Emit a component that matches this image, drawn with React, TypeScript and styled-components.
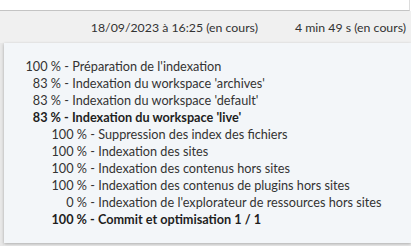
import React from "react";
import styled, { createGlobalStyle } from "styled-components";

const Global = createGlobalStyle`
  html, body { margin: 0; padding: 0; background: #ffffff; }
  body { font-family: "Lato", "Open Sans", "Liberation Sans", sans-serif; }
`;

const Page = styled.div`
  width: 411px;
  height: 246px;
  overflow: hidden;
  display: flex;
  flex-direction: column;
  background: #ffffff;
`;

const TopStrip = styled.div`
  height: 10px;
  flex: none;
  background: #ffffff;
  border-right: 1px solid #dcdcdc;
  margin-right: 1px;
  border-bottom: 1px solid #c4c4c4;
  box-shadow: 0 1px 0 #dedede;
`;

const DateRow = styled.div`
  height: 32px;
  flex: none;
  display: flex;
  justify-content: flex-end;
  align-items: center;
  gap: 37px;
  padding: 0 5px 0 0;
  background: #f0f0f0;
  color: #333333;
  font-size: 12.3px;
  white-space: nowrap;
`;

const Cell = styled.span``;

const Body = styled.div`
  flex: 1;
  display: flex;
  background: #ececec;
  min-height: 0;
`;

const Gutter = styled.div`
  width: 4px;
  flex: none;
  background: #e8e8e8;
`;

const Panel = styled.div`
  flex: 1;
  height: 200px;
  background: #f3f6f9;
  box-shadow: 0 1px 3px rgba(0, 0, 0, 0.28);
  padding: 15px 0 0 18px;
  box-sizing: border-box;
  display: flex;
  flex-direction: column;
`;

const Line = styled.div<{ $level: number; $bold?: boolean }>`
  display: flex;
  height: 17px;
  line-height: 17px;
  font-size: 12.7px;
  white-space: nowrap;
  padding-left: ${(p) => p.$level * 26}px;
  color: ${(p) => (p.$bold ? "#1e1e1e" : "#333333")};
  font-weight: ${(p) => (p.$bold ? 700 : 400)};
`;

const Pct = styled.span`
  display: inline-block;
  width: 39px;
  text-align: right;
  flex: none;
`;

const Label = styled.span`
  white-space: pre;
`;

type Step = { pct: number; label: string; level: number; bold?: boolean };

const steps: Step[] = [
  { pct: 100, label: "Préparation de l'indexation", level: 0 },
  { pct: 83, label: "Indexation du workspace 'archives'", level: 0 },
  { pct: 83, label: "Indexation du workspace 'default'", level: 0 },
  { pct: 83, label: "Indexation du workspace 'live'", level: 0, bold: true },
  { pct: 100, label: "Suppression des index des fichiers", level: 1 },
  { pct: 100, label: "Indexation des sites", level: 1 },
  { pct: 100, label: "Indexation des contenus hors sites", level: 1 },
  { pct: 100, label: "Indexation des contenus de plugins hors sites", level: 1 },
  { pct: 0, label: "Indexation de l'explorateur de ressources hors sites", level: 1 },
  { pct: 100, label: "Commit et optimisation 1 / 1", level: 1, bold: true },
];

export default function App() {
  return (
    <Page>
      <Global />
      <TopStrip />
      <DateRow>
        <Cell>18/09/2023 à 16:25 (en cours)</Cell>
        <Cell>4 min 49 s (en cours)</Cell>
      </DateRow>
      <Body>
        <Gutter />
        <Panel>
          {steps.map((s, i) => (
            <Line key={i} $level={s.level} $bold={s.bold}>
              <Pct>{s.pct} %</Pct>
              <Label>{" - " + s.label}</Label>
            </Line>
          ))}
        </Panel>
      </Body>
    </Page>
  );
}
